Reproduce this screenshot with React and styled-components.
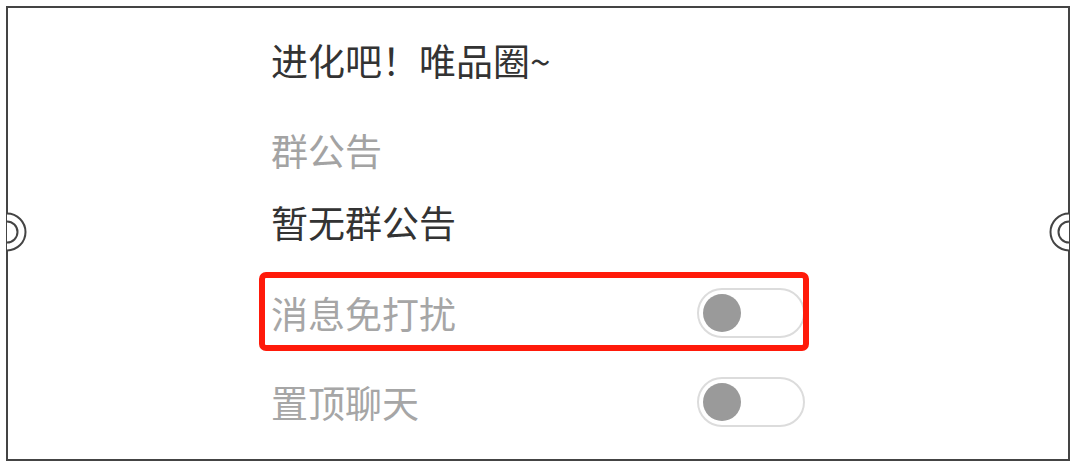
import React, { useState } from "react"
import styled, { createGlobalStyle } from "styled-components"

const GlobalStyle = createGlobalStyle`
  html, body {
    margin: 0;
    padding: 0;
    background: #fff;
  }
  body {
    font-family: "Noto Sans CJK SC", "Noto Sans", sans-serif;
  }
`

const Frame = styled.div`
  position: relative;
  box-sizing: border-box;
  margin: 6px 10px 6px 6px;
  height: 455px;
  border: 2px solid #444;
  background: #fff;
`

const Handle = styled.svg`
  position: absolute;
  top: 202px;
  ${(p) => (p.$side === "left" ? "left: -1px;" : "right: -1px;")}
  width: 24px;
  height: 44px;
  overflow: visible;
`

const Column = styled.div`
  width: 534px;
  margin: 0 auto;
  padding-top: 27px;
  display: flex;
  flex-direction: column;
`

const Line = styled.div`
  height: 50px;
  display: flex;
  align-items: center;
  font-size: 37px;
  line-height: 1;
  white-space: nowrap;
  color: ${(p) => (p.$muted ? "#a3a3a3" : "#333")};
  margin-top: ${(p) => p.$gap || 0}px;
`

const Row = styled.div`
  position: relative;
  height: 80px;
  display: flex;
  align-items: center;
  justify-content: space-between;
  margin-top: ${(p) => p.$gap || 0}px;

  ${(p) =>
    p.$marked &&
    `
    &::after {
      content: "";
      position: absolute;
      inset: -1px -4px 2px -12px;
      border: 6px solid #ff1a0a;
      border-radius: 7px;
      pointer-events: none;
    }
  `}
`

const RowLabel = styled.span`
  font-size: 37px;
  line-height: 1;
  color: #a6a6a6;
`

const Toggle = styled.button`
  position: relative;
  box-sizing: border-box;
  width: 108px;
  height: 50px;
  padding: 0;
  border: 2px solid #dcdcdc;
  border-radius: 25px;
  background: ${(p) => (p.$on ? "#4cd964" : "#fff")};
  cursor: pointer;

  &::before {
    content: "";
    position: absolute;
    top: 4px;
    left: ${(p) => (p.$on ? "62px" : "4px")};
    width: 38px;
    height: 38px;
    border-radius: 50%;
    background: ${(p) => (p.$on ? "#fff" : "#9a9a9a")};
  }
`

const HandleMark = ({ side }) => {
  const dir = side === "left" ? 1 : 0
  const cx = side === "left" ? 0 : 24
  return (
    <Handle $side={side} viewBox="0 0 24 44">
      <path
        d={`M ${cx} 3.5 A 18.5 18.5 0 0 ${dir} ${cx} 40.5 Z`}
        fill="#fff"
        stroke="none"
      />
      <path
        d={`M ${cx} 3.5 A 18.5 18.5 0 0 ${dir} ${cx} 40.5`}
        fill="none"
        stroke="#444"
        strokeWidth="2"
      />
      <path
        d={`M ${cx} 11.5 A 10.5 10.5 0 0 ${dir} ${cx} 32.5`}
        fill="none"
        stroke="#444"
        strokeWidth="2"
      />
    </Handle>
  )
}

const App = () => {
  const [mute, setMute] = useState(false)
  const [pin, setPin] = useState(false)

  return (
    <>
      <GlobalStyle />
      <Frame>
        <HandleMark side="left" />
        <HandleMark side="right" />
        <Column>
          <Line>进化吧！唯品圈~</Line>
          <Line $muted $gap={40}>群公告</Line>
          <Line $gap={22}>暂无群公告</Line>
          <Row $marked $gap={26}>
            <RowLabel>消息免打扰</RowLabel>
            <Toggle $on={mute} onClick={() => setMute(!mute)} />
          </Row>
          <Row $gap={9}>
            <RowLabel>置顶聊天</RowLabel>
            <Toggle $on={pin} onClick={() => setPin(!pin)} />
          </Row>
        </Column>
      </Frame>
    </>
  )
}

export default App
